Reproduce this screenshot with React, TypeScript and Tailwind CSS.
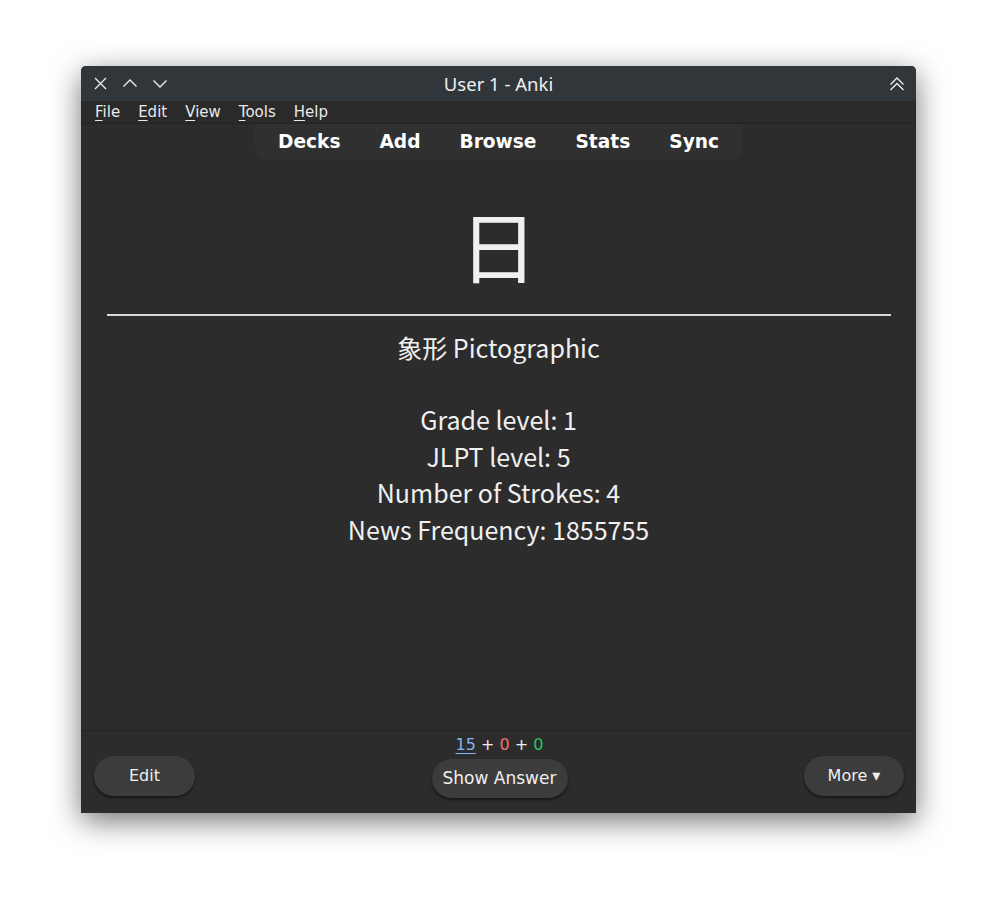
export default function App() {
  const menu = ["File", "Edit", "View", "Tools", "Help"];
  const nav = ["Decks", "Add", "Browse", "Stats", "Sync"];

  return (
    <div className="min-h-[912px] w-[1000px] bg-white pt-[66px] pl-[81px]">
      <div className="flex h-[747px] w-[835px] flex-col overflow-hidden rounded-t-[5px] bg-[#2c2c2c] shadow-[0_8px_30px_rgba(0,0,0,0.55)] [font-family:'DejaVu_Sans',sans-serif]">
        {/* title bar */}
        <div className="relative flex h-[35px] shrink-0 items-center bg-[#31363b] text-[#eff0f1]">
          <div className="flex items-center gap-[14px] pl-[12px]">
            <svg width="15" height="15" viewBox="0 0 15 15" className="stroke-[#eff0f1]" strokeWidth="1.3" fill="none">
              <path d="M2 2 L13 13 M13 2 L2 13" />
            </svg>
            <svg width="16" height="15" viewBox="0 0 16 15" className="stroke-[#eff0f1]" strokeWidth="1.3" fill="none">
              <path d="M1.5 10.5 L8 4 L14.5 10.5" />
            </svg>
            <svg width="16" height="15" viewBox="0 0 16 15" className="stroke-[#eff0f1]" strokeWidth="1.3" fill="none">
              <path d="M1.5 4.5 L8 11 L14.5 4.5" />
            </svg>
          </div>
          <div className="absolute inset-x-0 top-0 flex h-[35px] items-center justify-center text-[18.5px] [font-family:'Noto_Sans',sans-serif]">
            User 1 - Anki
          </div>
          <div className="ml-auto pr-[11px]">
            <svg width="16" height="16" viewBox="0 0 16 16" className="stroke-[#eff0f1]" strokeWidth="1.3" fill="none">
              <path d="M1.5 8.5 L8 2 L14.5 8.5 M1.5 14 L8 7.5 L14.5 14" />
            </svg>
          </div>
        </div>

        {/* menu bar */}
        <div className="flex h-[23px] shrink-0 items-center gap-[18px] border-b border-[#232323] bg-[#2a2a2a] pl-[14px] text-[15px] text-[#e8e8e8]">
          {menu.map((m) => (
            <span key={m}>
              <span className="underline underline-offset-[3px]">{m[0]}</span>
              {m.slice(1)}
            </span>
          ))}
        </div>

        {/* toolbar */}
        <div className="flex shrink-0 justify-center">
          <div className="flex h-[36px] w-[488px] items-center justify-center gap-[39px] rounded-b-[12px] bg-[#303030] text-[18.6px] font-bold text-white">
            {nav.map((n) => (
              <span key={n}>{n}</span>
            ))}
          </div>
        </div>

        {/* card */}
        <div className="flex flex-1 flex-col items-center text-[#f0f0f0] [font-family:'Noto_Sans_CJK_JP',sans-serif]">
          <div className="mt-[32px] text-[78px] leading-[104px]">日</div>
          <div className="mt-[18px] h-[2px] w-[784px] bg-[#d8d8d8]" />
          <div className="mt-[13px] text-[25px] leading-[36px]">象形 Pictographic</div>
          <div className="mt-[36px] flex flex-col items-center text-[25px] leading-[36.5px]">
            <span>Grade level: 1</span>
            <span>JLPT level: 5</span>
            <span>Number of Strokes: 4</span>
            <span>News Frequency: 1855755</span>
          </div>
        </div>

        {/* bottom bar */}
        <div className="relative flex h-[83px] shrink-0 items-start justify-between border-t border-[#242424] bg-[#2c2c2c] pr-[12px] pl-[13px] text-[16px] text-[#efefef]">
          <button className="mt-[25px] h-[40px] w-[101px] rounded-full bg-[#3c3c3c] shadow-[0_2px_3px_rgba(0,0,0,0.5)]">
            Edit
          </button>
          <div className="flex flex-col items-center">
            <div className="mt-[4px] text-[16px] leading-[20px]">
              <span className="text-[#82b4f0] underline underline-offset-[3px]">15</span>
              <span> + </span>
              <span className="text-[#f07070]">0</span>
              <span> + </span>
              <span className="text-[#22c55e]">0</span>
            </div>
            <button className="mt-[4px] h-[39px] w-[136px] rounded-full bg-[#3c3c3c] text-[17px] shadow-[0_2px_3px_rgba(0,0,0,0.5)]">
              Show Answer
            </button>
          </div>
          <button className="mt-[25px] h-[40px] w-[100px] rounded-full bg-[#3c3c3c] shadow-[0_2px_3px_rgba(0,0,0,0.5)]">
            More ▾
          </button>
        </div>
      </div>
    </div>
  );
}
